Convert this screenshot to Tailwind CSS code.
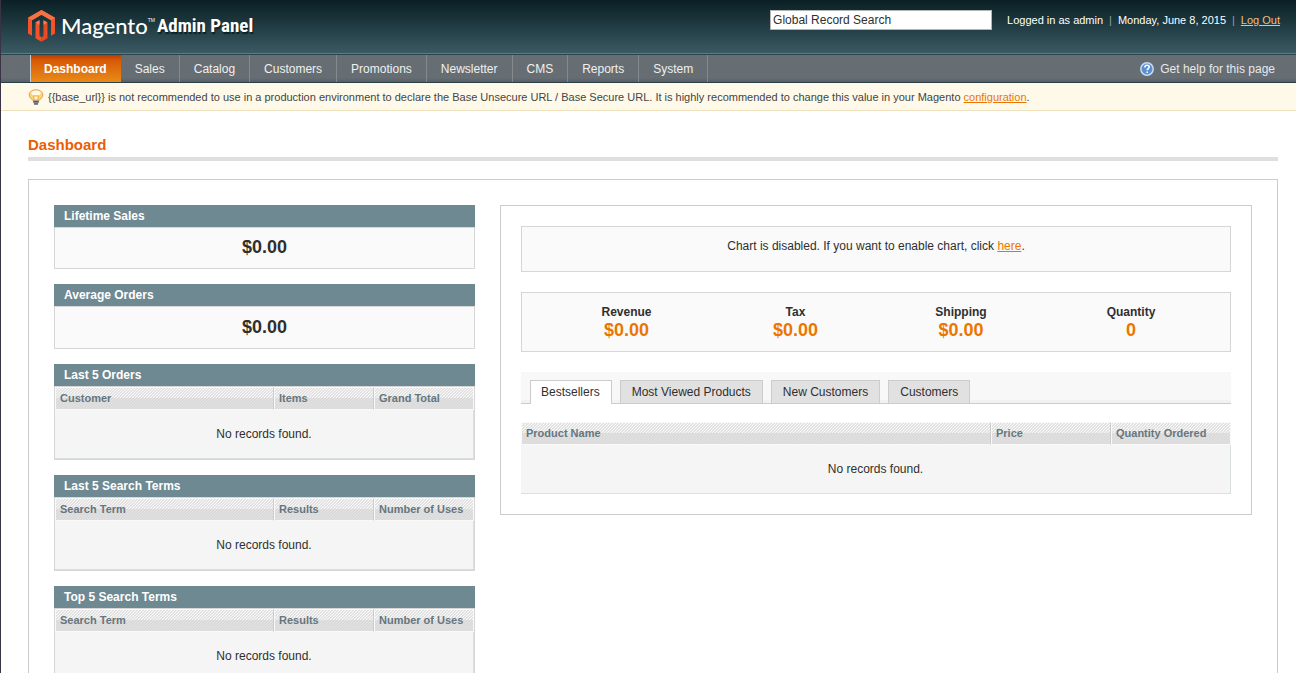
<!DOCTYPE html>
<html lang="en">
<head>
<meta charset="utf-8">
<title>Dashboard / Magento Admin</title>
<script src="https://cdn.jsdelivr.net/npm/@tailwindcss/browser@4"></script>
<style>
  .hatch th {
    background-image:
      linear-gradient(to bottom, transparent 10px, rgba(214,214,214,.65) 10px),
      linear-gradient(135deg, #e2e2e2 0 17%, #fafafa 17% 50%, #e2e2e2 50% 67%, #fafafa 67%);
    background-size: auto, 3px 3px;
    background-clip: padding-box;
  }
</style>
</head>
<body class="min-h-screen border-l border-[#3a3346] bg-white font-['Liberation_Sans',Arial,sans-serif] text-xs text-[#2f2f2f]">

<header>
  <div class="flex h-[54px] items-start justify-between border-b border-[#5f7a84] bg-linear-to-b from-[#0a2025] to-[#3a5a64] pr-4 pl-[27px]">
    <a href="#" class="flex items-center pt-[10px] text-white" aria-label="Magento Admin Panel">
      <svg class="h-8 w-[27px]" viewBox="0 0 27 32" aria-hidden="true">
        <path d="M13.500 0 27 7.800V23.600L23 25.800V10.200L13.500 4.700 4 10.200V25.800L0 23.600V7.800Z" fill="#f4532a"/>
        <path d="M13.500 0 27 7.800 23 10.200 13.500 4.700 4 10.200 0 7.800Z" fill="#f47345"/>
        <path d="M7.500 12.500 11.500 10.200V26L13.500 27.200V31.800L7.500 28.300Z" fill="#f4532a"/>
        <path d="M15.500 10.200 19.500 12.500V28.300L13.500 31.800V27.200L15.500 26Z" fill="#e84a22"/>
        <path d="M7.500 12.500 11.500 10.200V14.800ZM15.500 10.200 19.500 12.500 15.500 14.800Z" fill="#f47f52"/>
      </svg>
      <span class="ml-[6px] font-['Lato',sans-serif] text-[22px] leading-8 font-medium">Magento</span>
      <span class="mr-[2px] self-start pt-1 text-[5px] leading-3">TM</span>
      <span class="font-['Liberation_Sans_Narrow','Roboto_Condensed','Open_Sans',sans-serif] text-[19px] leading-8 font-bold [text-shadow:1px_2px_1px_#0a2025]">Admin Panel</span>
    </a>
    <div class="flex items-center gap-[15px] pt-[10px] text-[11px] text-white">
      <input type="text" aria-label="Global Record Search" value="Global Record Search" class="h-5 w-[222px] border border-[#b4b4b4] bg-white px-[2px] text-xs text-[#2f2f2f]">
      <p class="flex gap-[6px]"><span>Logged in as admin</span><span class="text-[#8fa3a9]">|</span><span>Monday, June 8, 2015</span><span class="text-[#8fa3a9]">|</span><a href="#" class="text-[#f3bd7d] underline">Log Out</a></p>
    </div>
  </div>
  <nav class="flex h-[29px] items-stretch justify-between border-y border-t-[#2b434c] border-b-[#27404a] bg-[#666e73] bg-linear-to-b from-[#666e73] from-85% to-[#585e62] pr-[21px] pl-[29px] text-[#f0f0f0]">
    <ul class="flex border-l border-[#c9cdcf] leading-7">
      <li><a href="#" class="block h-full bg-linear-to-b from-[#b63c00] via-[#d65a06] via-20% to-[#ea8a18] pr-[14px] pl-[13px] font-bold text-white">Dashboard</a></li>
      <li><a href="#" class="block h-full border-r border-[#83898d] px-[14px]">Sales</a></li>
      <li><a href="#" class="block h-full border-r border-[#83898d] px-[14px]">Catalog</a></li>
      <li><a href="#" class="block h-full border-r border-[#83898d] px-[14px]">Customers</a></li>
      <li><a href="#" class="block h-full border-r border-[#83898d] px-[14px]">Promotions</a></li>
      <li><a href="#" class="block h-full border-r border-[#83898d] px-[14px]">Newsletter</a></li>
      <li><a href="#" class="block h-full border-r border-[#83898d] px-[14px]">CMS</a></li>
      <li><a href="#" class="block h-full border-r border-[#83898d] px-[14px]">Reports</a></li>
      <li><a href="#" class="block h-full border-r border-[#83898d] px-[14px]">System</a></li>
    </ul>
    <a href="#" class="flex items-center gap-[6px] text-[#e6e8ea]">
      <svg class="size-[14px]" viewBox="0 0 14 14" aria-hidden="true">
        <circle cx="7" cy="7" r="6.200" fill="#5b8fd0" stroke="#c4dcf3" stroke-width="1.500"/>
        <path d="M4.900 5.500c0-3 4.300-2.800 4.300-.4 0 1.500-2 1.500-2 3.200M7.200 9.500v1.500" fill="none" stroke="#fff" stroke-width="1.600"/>
      </svg>
      Get help for this page
    </a>
  </nav>
</header>

<div class="flex h-7 items-center gap-1 border-b border-[#eee2be] bg-[#fff9e9] pt-px pl-[27px] text-[11px] text-[#444]">
  <svg class="size-4" viewBox="0 0 16 16" aria-hidden="true">
    <path d="M8 .8c4 0 6.800 2.200 6.800 5.200 0 2.500-2 3.600-3.300 5.300h-7C3.200 9.600 1.200 8.500 1.200 6 1.200 3 4 .8 8 .8Z" fill="#ffd27a" stroke="#d99c4e" stroke-width=".9"/>
    <ellipse cx="8" cy="4" rx="4.800" ry="2.500" fill="#fff8e4"/>
    <path d="M5.600 7h4.800L9.700 11H6.300Z" fill="#fffbe0" stroke="#f0a51c" stroke-width=".9"/>
    <path d="M5.200 11.200h5.600v2.400L9.500 15.500h-3L5.200 13.600Z" fill="#a0a0a0"/>
    <path d="M5.200 12.800h5.600M6 15h4" stroke="#404040" stroke-width="1"/>
  </svg>
  <p>{{base_url}} is not recommended to use in a production environment to declare the Base Unsecure URL / Base Secure URL. It is highly recommended to change this value in your Magento <a href="#" class="text-[#ea7601] underline">configuration</a>.</p>
</div>

<main class="pt-[25px] pr-[18px] pl-[27px]">
  <h1 class="border-b-4 border-[#dfdfdf] pb-[3px] text-[15px] leading-[18px] font-bold text-[#eb5e00]">Dashboard</h1>

  <div class="mt-[18px] grid grid-cols-[421fr_752fr] items-start gap-[25px] border border-[#ccc] p-[25px]">
    <div class="flex flex-col gap-[15px]">
      <section>
        <h2 class="bg-[#6f8992] px-[10px] leading-[22px] font-bold text-white">Lifetime Sales</h2>
        <p class="border border-[#d6d6d6] bg-[#fafafa] pt-[7px] pb-[9px] text-center text-lg leading-6 font-bold">$0.00</p>
      </section>
      <section>
        <h2 class="bg-[#6f8992] px-[10px] leading-[22px] font-bold text-white">Average Orders</h2>
        <p class="border border-[#d6d6d6] bg-[#fafafa] pt-2 pb-[9px] text-center text-lg leading-6 font-bold">$0.00</p>
      </section>
      <section>
        <h2 class="bg-[#6f8992] px-[10px] leading-[22px] font-bold text-white">Last 5 Orders</h2>
        <div class="border border-[#d6d6d6]">
          <table class="hatch w-full table-fixed border-separate border-spacing-0 bg-[#f5f5f5]">
            <thead><tr class="h-[23px] text-left text-[11px] leading-[21px] text-[#67767e]"><th class="border border-[#f9f9f9] border-r-[#ccc] px-1">Customer</th><th class="w-[100px] border border-[#f9f9f9] border-r-[#ccc] px-1">Items</th><th class="w-[100px] border border-[#f9f9f9] px-1">Grand Total</th></tr></thead>
            <tbody><tr><td colspan="3" class="h-[49px] border-r border-b border-[#dadfe0] text-center">No records found.</td></tr></tbody>
          </table>
        </div>
      </section>
      <section>
        <h2 class="bg-[#6f8992] px-[10px] leading-[22px] font-bold text-white">Last 5 Search Terms</h2>
        <div class="border border-[#d6d6d6]">
          <table class="hatch w-full table-fixed border-separate border-spacing-0 bg-[#f5f5f5]">
            <thead><tr class="h-[23px] text-left text-[11px] leading-[21px] text-[#67767e]"><th class="border border-[#f9f9f9] border-r-[#ccc] px-1">Search Term</th><th class="w-[100px] border border-[#f9f9f9] border-r-[#ccc] px-1">Results</th><th class="w-[100px] border border-[#f9f9f9] px-1">Number of Uses</th></tr></thead>
            <tbody><tr><td colspan="3" class="h-[49px] border-r border-b border-[#dadfe0] text-center">No records found.</td></tr></tbody>
          </table>
        </div>
      </section>
      <section>
        <h2 class="bg-[#6f8992] px-[10px] leading-[22px] font-bold text-white">Top 5 Search Terms</h2>
        <div class="border border-[#d6d6d6]">
          <table class="hatch w-full table-fixed border-separate border-spacing-0 bg-[#f5f5f5]">
            <thead><tr class="h-[23px] text-left text-[11px] leading-[21px] text-[#67767e]"><th class="border border-[#f9f9f9] border-r-[#ccc] px-1">Search Term</th><th class="w-[100px] border border-[#f9f9f9] border-r-[#ccc] px-1">Results</th><th class="w-[100px] border border-[#f9f9f9] px-1">Number of Uses</th></tr></thead>
            <tbody><tr><td colspan="3" class="h-[49px] border-r border-b border-[#dadfe0] text-center">No records found.</td></tr></tbody>
          </table>
        </div>
      </section>
    </div>

    <div class="border border-[#ccc] p-5">
      <p class="border border-[#d6d6d6] bg-[#fafafa] pt-[11px] pb-[17px] text-center leading-4">Chart is disabled. If you want to enable chart, click <a href="#" class="text-[#ea7601] underline">here</a>.</p>

      <dl class="mt-5 grid grid-cols-[169fr_169fr_162fr_178fr] border border-[#d6d6d6] bg-[#fafafa] py-[11px] pr-[10px] pl-5 text-center font-bold">
        <div><dt class="leading-4">Revenue</dt><dd class="text-lg leading-5 text-[#ea7601]">$0.00</dd></div>
        <div><dt class="leading-4">Tax</dt><dd class="text-lg leading-5 text-[#ea7601]">$0.00</dd></div>
        <div><dt class="leading-4">Shipping</dt><dd class="text-lg leading-5 text-[#ea7601]">$0.00</dd></div>
        <div><dt class="leading-4">Quantity</dt><dd class="text-lg leading-5 text-[#ea7601]">0</dd></div>
      </dl>

      <div class="mt-5 flex h-8 items-end gap-2 border-b border-[#ccc] bg-linear-to-b from-[#f8f8f8] from-90% to-[#f2f2f2] to-90% px-[9px]" role="tablist">
        <button type="button" role="tab" aria-selected="true" class="-mb-px h-6 border border-b-0 border-[#ccc] bg-white pr-[11px] pb-px pl-[10px]">Bestsellers</button>
        <button type="button" role="tab" aria-selected="false" class="h-[23px] border border-b-0 border-[#ccc] bg-[#e1e1e1] px-[11px]">Most Viewed Products</button>
        <button type="button" role="tab" aria-selected="false" class="h-[23px] border border-b-0 border-[#ccc] bg-[#e1e1e1] px-[11px]">New Customers</button>
        <button type="button" role="tab" aria-selected="false" class="h-[23px] border border-b-0 border-[#ccc] bg-[#e1e1e1] px-[11px]">Customers</button>
      </div>

      <table class="hatch mt-[18px] w-full table-fixed border-separate border-spacing-0 bg-[#f5f5f5]">
        <thead><tr class="h-[23px] text-left text-[11px] leading-[21px] text-[#67767e]"><th class="border border-[#f9f9f9] border-r-[#ccc] px-1">Product Name</th><th class="w-[120px] border border-[#f9f9f9] border-r-[#ccc] px-1">Price</th><th class="w-[120px] border border-[#f9f9f9] px-1">Quantity Ordered</th></tr></thead>
        <tbody><tr><td colspan="3" class="h-[49px] border-r border-b border-[#dadfe0] text-center">No records found.</td></tr></tbody>
      </table>
    </div>
  </div>
</main>
</body>
</html>
